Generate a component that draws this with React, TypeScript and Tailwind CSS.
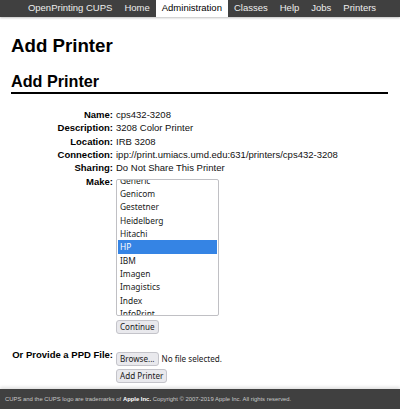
import React from 'react';

const navItems = ['OpenPrinting CUPS', 'Home', 'Administration', 'Classes', 'Help', 'Jobs', 'Printers'];

const makes = [
  'Generic',
  'Genicom',
  'Gestetner',
  'Heidelberg',
  'Hitachi',
  'HP',
  'IBM',
  'Imagen',
  'Imagistics',
  'Index',
  'InfoPrint',
];

const details: [string, string][] = [
  ['Name:', 'cps432-3208'],
  ['Description:', '3208 Color Printer'],
  ['Location:', 'IRB 3208'],
  ['Connection:', 'ipp://print.umiacs.umd.edu:631/printers/cps432-3208'],
  ['Sharing:', 'Do Not Share This Printer'],
];

function FormButton({ children }: { children: React.ReactNode }) {
  return (
    <button
      type="button"
      className="h-[14px] px-[3px] flex items-center rounded-[3px] border border-[#c4c4ca] bg-[#e9e9ed] text-[8.1px] leading-[12px] text-[#1a1a1a] font-['Noto_Sans',sans-serif]"
    >
      {children}
    </button>
  );
}

export default function App() {
  return (
    <div className="min-h-screen flex flex-col bg-white text-black font-['Liberation_Sans',Arial,sans-serif]">
      <nav className="h-[17px] bg-[#404040] flex justify-center pl-[4px] shadow-[0_1px_2px_rgba(0,0,0,0.25)]">
        {navItems.map((item) => (
          <a
            key={item}
            className={
              'px-[6px] h-[17px] flex items-center text-[9.5px] ' +
              (item === 'Administration' ? 'bg-white text-black' : 'text-[#eeeeee]')
            }
          >
            {item}
          </a>
        ))}
      </nav>

      <main className="px-[11px] pr-[12px]">
        <h1 className="mt-[18px] text-[18.7px] leading-[22px] font-bold">Add Printer</h1>
        <h2 className="mt-[15px] text-[16.2px] leading-[19.5px] font-bold border-b-2 border-black">Add Printer</h2>

        <div className="mt-[14.5px] grid grid-cols-[102px_1fr] gap-x-[3px] text-[9.5px] leading-[13.35px]">
          {details.map(([label, value]) => (
            <React.Fragment key={label}>
              <div className="text-right font-bold">{label}</div>
              <div className="text-[#111]">{value}</div>
            </React.Fragment>
          ))}

          <div className="text-right font-bold">Make:</div>
          <div className="flex flex-col items-start">
            <div className="mt-[4px] w-[103px] h-[137.5px] border border-[#c0c0c4] rounded-[2px] overflow-hidden p-[1px] font-['Noto_Sans',sans-serif] text-[8.4px]">
              <div className="-mt-[7px]">
                {makes.map((m) => (
                  <div
                    key={m}
                    className={
                      'h-[13.33px] leading-[13.33px] px-[2px] ' +
                      (m === 'HP' ? 'bg-[#3584e4] text-white' : 'text-[#1a1a1a]')
                    }
                  >
                    {m}
                  </div>
                ))}
              </div>
            </div>
            <div className="mt-[4px]">
              <FormButton>Continue</FormButton>
            </div>
          </div>

          <div className="h-[13.35px]" />
          <div />

          <div className="text-right font-bold">Or Provide a PPD File:</div>
          <div className="flex flex-col items-start">
            <div className="mt-[4px] flex items-center gap-[3px]">
              <FormButton>Browse...</FormButton>
              <span className="text-[8.1px] leading-none text-[#1a1a1a] font-['Noto_Sans',sans-serif]">No file selected.</span>
            </div>
            <div className="mt-[3px]">
              <FormButton>Add Printer</FormButton>
            </div>
          </div>
        </div>
      </main>

      <footer className="mt-auto h-[20px] bg-[#404040] flex items-center px-[5px] text-[5.9px] text-[#c8c8c8] shadow-[0_-2px_3px_rgba(0,0,0,0.12)]">
        <span>
          CUPS and the CUPS logo are trademarks of <b className="text-white">Apple Inc.</b> Copyright © 2007-2019 Apple Inc. All rights reserved.
        </span>
      </footer>
    </div>
  );
}
